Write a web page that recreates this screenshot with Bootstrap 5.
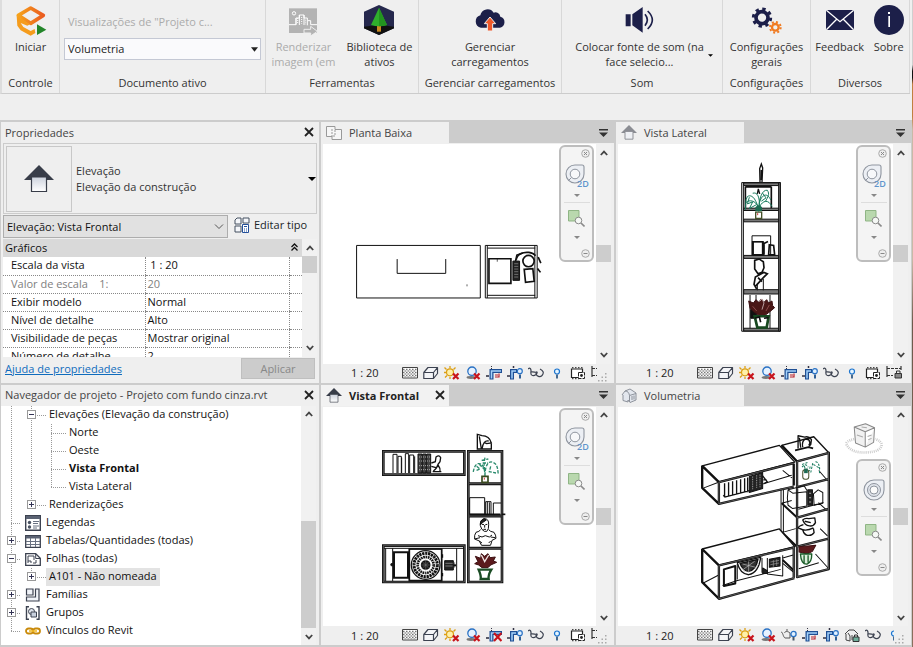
<!DOCTYPE html>
<html lang="pt-BR">
<head>
<meta charset="utf-8">
<meta name="viewport" content="width=device-width, initial-scale=1">
<title>Projeto com fundo cinza.rvt</title>
<link href="https://cdn.jsdelivr.net/npm/bootstrap@5.3.0/dist/css/bootstrap.min.css" rel="stylesheet">
<style>
:root{--chrome:#efefef;--gutter:#cccccc;--ink:#333}
body{font-family:"Open Sans","Noto Sans",sans-serif;font-size:11px;line-height:15px;color:var(--ink);background:var(--chrome);overflow:hidden}
button{font:inherit;color:inherit;background:none;border:0;padding:0}
svg{display:block;flex:none}
.app-shell{min-width:0}
.app-edge{width:1px;background:linear-gradient(#cfcfcf 0 10%,#111 11% 12%,#c08040 13% 18%,#c9b9a6 20% 40%,#6d5a4c 50%,#8a6f5c)}
.ribbon{height:94px;display:grid;grid-template-columns:58fr 206fr 153fr 143fr 161fr 88fr 99fr;border-bottom:1px solid var(--gutter);border-left:2px solid #ddd;margin-right:2px}
.r-group{border-right:1px solid #d8d8d8;min-width:0}
.r-title{padding-bottom:2px;line-height:16px}
.r-btn{padding-top:4px;line-height:15px}
.r-btn svg{margin:0 auto 3px}
.r-off{color:#ababab}
.doc-label{padding-top:14px}
.under-ribbon{height:26px}
.view-select{--bs-form-select-bg-img:url("data:image/svg+xml,%3Csvg xmlns='http://www.w3.org/2000/svg' viewBox='0 0 8 5'%3E%3Cpath fill='%23222' d='M0 0h8L4 5z'/%3E%3C/svg%3E");font-size:11px;line-height:15px;height:22px;margin-top:9px;padding:0 16px 2px 3px;border:1px solid #c4c8d4;border-radius:0;background-color:#fafafc;background-size:7px 5px;background-position:right 2px center;color:#222}
.type-select{--bs-form-select-bg-img:url("data:image/svg+xml,%3Csvg xmlns='http://www.w3.org/2000/svg' viewBox='0 0 10 6'%3E%3Cpath fill='none' stroke='%23555' d='M1 .5l4 4 4-4'/%3E%3C/svg%3E");font-size:11px;line-height:15px;height:23px;width:225px;padding:0 16px 0 3px;border:1px solid #adadad;border-radius:0;background-color:#e1e1e1;background-size:10px 6px;background-position:right 3px center;color:#111}
.type-row{margin:1px 2px 0;gap:6px}
.workspace{display:grid;grid-template-columns:318px minmax(0,293fr) minmax(0,295fr);grid-template-rows:minmax(0,1fr) minmax(0,1fr);gap:2px;padding:2px 1px;background:var(--gutter);min-height:0}
.pane{background:var(--chrome);min-height:0;min-width:0}
.pane-title{height:21px;padding:0 5px 1px 4px;color:#444}
.type-box{height:71px;margin:0 2px;border:1px solid var(--gutter)}
.type-thumb{width:66px;height:66px;margin:2px;border:1px solid #c8c8c8}
.type-name{line-height:16px;margin-left:2px}
.grid-wrap{margin:1px 2px 0;background:#fff;min-height:0;flex:1 1 0}
.props{width:100%;border-collapse:collapse;table-layout:fixed;color:#111}
.props th,.props td{height:18px;padding:0 0 2px 2px;font-weight:400;border-bottom:1px dotted #888;line-height:15px;white-space:nowrap}
.props td{border-left:1px dotted #888}
.props tbody th{padding-left:8px}
.props thead th{background:#d9d9d9;border:0}
.props .dim>*{color:#808080}
.c-name{width:142px}.c-btn{width:13px}
.foot{padding:1px 4px 4px}
.apply{width:74px;height:21px;background:#ccc;border:1px solid #bfbfbf;color:#888}
.help{color:#0f6cbd;font-size:11px}
.sbar{width:15px;background:#f1f1f1;display:flex;flex-direction:column;flex:none}
.sbar button{height:17px;display:flex;align-items:center;justify-content:center}
.sbar .track{flex:1;display:flex;flex-direction:column}
.sbar .thumb{height:17px;background:#cdcdcd}
.sbar.mid .track{justify-content:center}
.sbar.end .track{justify-content:flex-end}
.sbar.end .thumb{height:52%}
.tree-wrap{min-height:0;padding-right:3px}
.tree{list-style:none;margin:0;padding:0;background:#fff;color:#111;flex:1 1 0;min-width:0;overflow:hidden}
.tree li{display:flex;align-items:center;height:18px;white-space:nowrap}
.g{width:20px;height:18px;flex:none;display:flex;align-items:center;justify-content:center;background-repeat:no-repeat;--v:repeating-linear-gradient(#999 0 1px,transparent 1px 2px);--h:repeating-linear-gradient(90deg,#999 0 1px,transparent 1px 2px)}
.g-v{background-image:var(--v);background-position:10px 0;background-size:1px 100%}
.g-t{background-image:var(--v),var(--h);background-position:10px 0,10px 9px;background-size:1px 100%,10px 1px}
.g-l{background-image:var(--v),var(--h);background-position:10px 0,10px 9px;background-size:1px 10px,10px 1px}
.g-x{width:5px;background-image:var(--h);background-position:0 9px;background-size:5px 1px}
.exp{width:9px;height:9px;background:#fff;border:1px solid #999;position:relative}
.exp::before,.exp.more::after{content:"";position:absolute;left:1px;top:3px;width:5px;height:1px;background:#335}
.exp.more::after{left:3px;top:1px;width:1px;height:5px}
.lbl{padding:0 3px 2px;line-height:16px}
.lbl.sel{background:#e3e3e3}
.ico-lbl{padding-left:5px}
.tabstrip{height:21px;background:var(--gutter);padding-right:6px}
.v-tab{width:128px;height:21px;padding:0 4px 0 5px;background:var(--chrome);font-size:11px;color:#444;display:flex;align-items:center;gap:7px}
.v-tab.on{background:#f2f2f2;color:#222;font-weight:700}
.canvas{background:#fff;min-width:0;flex:1 1 0;display:flex;position:relative;overflow:hidden}
.canvas>svg{flex:1 1 0;min-width:0;height:100%}
.view-body{flex:1 1 0;min-height:0;margin:1px 3px 0 2px;display:flex}
.navbar2{position:absolute;right:2px;top:1px;width:35px;padding:2px;border:2px solid #bdbdbd;border-radius:6px;background:#f4f4f4;display:flex;flex-direction:column;align-items:center}
.navbar2.low{top:52px}
.navbar2 hr{width:26px;margin:0;border-color:#999}
.n-end{align-self:flex-end}
.n-wheel{margin-top:6px}
.n-drop{padding:6px 10px 5px}
.n-zoom{margin:7px 0 3px}
.n-less{margin-top:5px}
.statusbar{height:19px;padding:0 0 1px 30px;overflow:hidden}
.scale-btn{width:48px;text-align:left;color:#222;flex:none}
.s-icons{flex:1 1 0;min-width:0;overflow:hidden;display:flex}
.s-icons button{width:21px;flex:none;display:flex;justify-content:center}
.grip{width:17px}
</style>
<script src="https://cdn.jsdelivr.net/npm/bootstrap@5.3.0/dist/js/bootstrap.bundle.min.js"></script>
</head>
<body class="vh-100 d-flex">
<svg width="0" height="0" class="position-absolute" aria-hidden="true">
 <defs>
  <linearGradient id="hg" x2="0" y2="1"><stop stop-color="#ccd2dd"/><stop offset="1" stop-color="#fff"/></linearGradient>
  <symbol id="x" viewBox="0 0 10 10"><path d="M1 1l8 8M9 1L1 9" stroke="#222" stroke-width="1.8"/></symbol>
  <symbol id="up" viewBox="0 0 8 6"><path d="M.8 5L4 1.6 7.200 5" fill="none" stroke="#444" stroke-width="1.8"/></symbol>
  <symbol id="down" viewBox="0 0 8 6"><path d="M.8 1L4 4.400 7.200 1" fill="none" stroke="#444" stroke-width="1.8"/></symbol>
  <symbol id="tri" viewBox="0 0 8 4"><path d="M0 0h8L4 4z"/></symbol>
  <symbol id="tabmenu" viewBox="0 0 9 8"><path d="M0 0h9v1.500H0zM0 3.500h9L4.500 8z" fill="#333"/></symbol>
  <symbol id="house" viewBox="0 0 30 28"><path d="M15 0L30 15H0z" fill="#383d49"/><path d="M7.500 12h15v14.500h-15z" fill="url(#hg)" stroke="#383d49" stroke-width="1.200"/></symbol>
  <symbol id="house-dim" viewBox="0 0 30 28"><path d="M15 0L30 15H0z" fill="#8b8d93"/><path d="M7.500 12h15v14.500h-15z" fill="#eef0f4" stroke="#8b8d93" stroke-width="1.800"/></symbol>
  <symbol id="plan" viewBox="0 0 16 14"><path d="M.5.5H9v3h6.500v10H6v-3H.5z" fill="#f6f6f6" stroke="#999"/><path d="M6 3v8M9 4v6H6" fill="none" stroke="#999" stroke-dasharray="2 1"/></symbol>
  <symbol id="house3d" viewBox="0 0 16 15"><path d="M1 7L4 3l5-2 6 4v7l-6 2.500L7 12v2l-5-1.500V7" fill="#e3e7ee" stroke="#8d929b"/><path d="M4 3c3 0 4 2 4.500 4.500L15 5.500M8.500 7.500V14M11 8v4M13 7.500v4" stroke="#8d929b" fill="none"/></symbol>
  <symbol id="s-grid" viewBox="0 0 16 14"><path d="M.5 1.500h15v10.500H.5z" fill="#fff" stroke="#444"/><path d="M1 3.500h14M1 6.500h14M1 9.500h14" stroke="#777" stroke-width="1.500" stroke-dasharray="1.500 1.500"/><path d="M2.500 5h12M2.500 8h12M2.500 11h12" stroke="#999" stroke-width="1.500" stroke-dasharray="1.500 1.500"/></symbol>
  <symbol id="s-box" viewBox="0 0 16 14"><path d="M.8 6.500L5 1.500h9.500v6L10.500 12.500H.8zM.8 6.500h9.700v6M10.500 6.500l4-5" fill="#f4f5f8" stroke="#3c4250" stroke-width="1.200" stroke-linejoin="round"/></symbol>
  <symbol id="redx" viewBox="0 0 16 14"><path d="M9 7.500l5.500 5.500M14.500 7.500L9 13" stroke="#c8141c" stroke-width="2.200"/></symbol>
  <symbol id="s-sun" viewBox="0 0 16 14"><path d="M6 0v2.500M.5 1.500l2 2M0 6.500h2M1 11.500l2-2M11.500 1.500l-2 2M6 13v-2" stroke="#dca016" stroke-width="1.300"/><circle cx="6" cy="6.300" r="3.500" fill="#fff0a8" stroke="#dca016" stroke-width="1.200"/><use href="#redx"/></symbol>
  <symbol id="s-shadow" viewBox="0 0 16 14"><ellipse cx="6" cy="11.500" rx="4.500" ry="1.400" fill="#777"/><circle cx="7" cy="5.200" r="4.200" fill="#e6f2ff" stroke="#2a72c4" stroke-width="1.300"/><use href="#redx"/></symbol>
  <symbol id="frame" viewBox="0 0 16 14"><path d="M0 10h3" stroke="#334" stroke-width="1.600"/><path d="M5.500 13.500V5H16" fill="none" stroke="#1f4f94" stroke-width="4"/><path d="M5.500 12.500V5H15" fill="none" stroke="#a5d2fa" stroke-width="1.500"/><path d="M5.500 0v3" stroke="#334" stroke-dasharray="1 1"/></symbol>
  <symbol id="s-crop" viewBox="0 0 16 14"><use href="#frame"/><path d="M9 11h4V7.500M9 9h3" fill="none" stroke="#b8202a" stroke-width="1.200"/></symbol>
  <symbol id="s-crop-x" viewBox="0 0 16 14"><use href="#frame"/><path d="M8 5l7.500 8M15.500 5L8 13" stroke="#c8141c" stroke-width="2.200"/></symbol>
  <symbol id="s-region" viewBox="0 0 16 14"><path d="M0 10h3M6.500 0v2" stroke="#334" stroke-width="1.500"/><path d="M5 13.500V5h5" fill="none" stroke="#1f4f94" stroke-width="4"/><path d="M5 12.500V5h4" fill="none" stroke="#a5d2fa" stroke-width="1.500"/><circle cx="12.800" cy="5.200" r="2.500" fill="#dff0ff" stroke="#2a72c4" stroke-width="1.200"/><path d="M12 8.500h2v4h-2z" fill="#2f5f95"/></symbol>
  <symbol id="s-glasses" viewBox="0 0 16 14"><path d="M0 3c2-2 3 0 3 1.500C3 7 2 9 4.500 9.500S9 8 9.200 6.500c0-1-1.500-.5-1.200 1 .5 3 4 4 6 2 2.500-3 1-5-2-6.500M3 6c2-.5 4 0 6 .5" fill="none" stroke="#3c4250" stroke-width="1.200"/></symbol>
  <symbol id="s-bulb" viewBox="0 0 16 14"><circle cx="8" cy="5.500" r="2.500" fill="#e6f5ff" stroke="#1b74cf" stroke-width="1.200"/><path d="M7 8.500h2v4H7z" fill="#456a90"/></symbol>
  <symbol id="s-chip" viewBox="0 0 16 14"><path d="M1.500 3h11v8.500h-11z" fill="#fff" stroke="#222" stroke-width="1.200"/><path d="M2 1.700h11M2 12.700h7" stroke="#222" stroke-dasharray="1.500 1.500"/><path d="M8.500 6.500h6v6h-6z" fill="#fff" stroke="#222" stroke-dasharray="4 1"/><circle cx="11.500" cy="9.500" r="1.400" fill="#222"/></symbol>
  <symbol id="s-dim" viewBox="0 0 16 14"><path d="M1 0v11M15 0v4" stroke="#333" stroke-width="1.200"/><path d="M1 2.500h14M1 9.500h6" fill="none" stroke="#333" stroke-dasharray="3 1"/><path d="M9 7.500h6.500V12H9z" fill="#888" stroke="#333"/><path d="M10.500 7V5h3.500v2" fill="none" stroke="#333"/></symbol>
  <symbol id="s-tea" viewBox="0 0 16 14"><path d="M0 4c2 0 2 5 4 6h5V5C7 3 4 3 3.500 5M6 3V1" fill="#eee" stroke="#555"/><circle cx="12.500" cy="6" r="2.600" fill="#dff0ff" stroke="#2a72c4" stroke-width="1.300"/><path d="M11.500 9h2v3.500h-2z" fill="#456"/></symbol>
  <symbol id="s-lock" viewBox="0 0 16 14"><path d="M1 6l4-4h5l4 4M2 6v6l4 1V8L4 5M8 12V7" fill="#eee" stroke="#444"/><path d="M9 9h6v4.500H9z" fill="#6fae9a" stroke="#333"/><path d="M10.500 9V7h3v2" fill="none" stroke="#333"/></symbol>
  <symbol id="gripdots" viewBox="0 0 10 10"><path d="M8 1h1.500v1.500H8zM8 4.500h1.500V6H8zM4.500 4.500H6V6H4.500zM8 8h1.500v1.500H8zM4.500 8H6v1.500H4.500zM1 8h1.500v1.500H1z" fill="#aaa"/></symbol>
  <symbol id="n-x" viewBox="0 0 9 9"><circle cx="4.500" cy="4.500" r="3.800" fill="#eee" stroke="#aaa"/><path d="M3 3l3 3M6 3L3 6" stroke="#888"/></symbol>
  <symbol id="n-minus" viewBox="0 0 9 9"><circle cx="4.500" cy="4.500" r="3.800" fill="#eee" stroke="#aaa"/><path d="M2.500 4.500h4" stroke="#888"/></symbol>
  <symbol id="n-wheel2d" viewBox="0 0 24 24"><path d="M10 1h7q2 0 2 2v7a9 9 0 1 1-9-9z" fill="#eceff4" stroke="#8f959f" stroke-width="1.100"/><circle cx="10" cy="10" r="4.800" fill="#f7f8fa" stroke="#8f959f"/><path d="M6.500 13.500l-3 3" stroke="#8f959f"/><text x="12" y="23" font-size="9" font-weight="600" fill="#5f95cc">2D</text></symbol>
  <symbol id="n-wheel3d" viewBox="0 0 24 24"><path d="M12 2h8q2 0 2 2v8a10 10 0 1 1-10-10z" fill="#eceff4" stroke="#8f959f" stroke-width="1.100"/><circle cx="12" cy="12" r="6.500" fill="#dfe3ea" stroke="#8f959f"/><circle cx="12" cy="12" r="4" fill="#fafafa" stroke="#8f959f"/></symbol>
  <symbol id="n-zoomr" viewBox="0 0 17 17"><path d="M.5.5h10.500V11H.5z" fill="#b9d8ae" stroke="#8fb585"/><circle cx="10.500" cy="10.500" r="3.300" fill="#f5f8f5" stroke="#8a8a8a"/><path d="M13 13l3.500 3.500" stroke="#8a8a8a" stroke-width="1.600"/></symbol>
 </defs>
</svg>

<template id="tpl-scroll"><button aria-label="Subir"><svg width="8" height="6"><use href="#up"/></svg></button><div class="track"><div class="thumb"></div></div><button aria-label="Descer"><svg width="8" height="6"><use href="#down"/></svg></button></template>
<template id="tpl-nav"><button class="n-end" aria-label="Fechar"><svg width="9" height="9"><use href="#n-x"/></svg></button><button class="n-wheel" aria-label="Roda de navegação"><svg width="24" height="24"><use class="wheel" href="#n-wheel2d"/></svg></button><button class="n-drop" aria-label="Opções da roda"><svg width="6" height="3" fill="#888"><use href="#tri"/></svg></button><hr><button class="n-zoom" aria-label="Zoom"><svg width="17" height="17"><use href="#n-zoomr"/></svg></button><button class="n-drop" aria-label="Opções de zoom"><svg width="6" height="3" fill="#888"><use href="#tri"/></svg></button><button class="n-end n-less" aria-label="Recolher"><svg width="9" height="9"><use href="#n-minus"/></svg></button></template>

<div class="app-shell d-flex flex-column flex-grow-1">
 <header>
  <div class="ribbon text-center">
   <section class="r-group d-flex flex-column">
    <button class="r-btn"><svg width="32" height="32" viewBox="45 9 96 96"><defs><linearGradient id="og"><stop stop-color="#f6a31a"/><stop offset="1" stop-color="#ea5b20"/></linearGradient></defs><path d="M55 43L92 21l38 22-38 24z" fill="none" stroke="url(#og)" stroke-width="11" stroke-linejoin="round"/><path d="M50 44l2 30 10 14 30 16 14-8-2-12-12 6-22-12-8-12 20 8 8-4-28-18z" fill="#f59c1c"/><path d="M111 70l28 16-28 16z" fill="#23862a"/></svg>Iniciar</button>
    <div class="r-title mt-auto">Controle</div>
   </section>
   <section class="r-group d-flex flex-column px-1">
    <label for="vsel" class="r-off doc-label text-start ps-1">Visualizações de "Projeto c...</label>
    <select id="vsel" class="form-select view-select"><option>Volumetria</option></select>
    <div class="r-title mt-auto">Documento ativo</div>
   </section>
   <section class="r-group d-flex flex-column">
    <div class="d-flex justify-content-around">
     <button class="r-btn r-off text-nowrap" disabled><svg width="32" height="32" viewBox="867 8 96 96"><path d="M873 21h84v74h-84z" fill="#b3b3b3"/><path d="M873 70h21V50h10v-9h14v9h10v8h10v12h19M894 50v20M904 41v30M918 41v30M928 58v14" fill="none" stroke="#fff" stroke-width="3"/><circle cx="888" cy="36" r="5" fill="none" stroke="#fff" stroke-width="3"/><path d="M899 50v18M911 47v20M923 55v14" stroke="#fff" stroke-width="3" stroke-dasharray="3 3"/><path d="M918 84h20v-9l20 15-20 14v-9h-20z" fill="#b3b3b3" stroke="#efefef" stroke-width="3"/></svg>Renderizar<br>imagem (em</button>
     <button class="r-btn text-nowrap"><svg width="32" height="32" viewBox="1089 12 96 96"><path d="M1137 15l45 20v50l-45 20-45-20V35z" fill="#25284d"/><path d="M1092 80l45-6 45 6v5l-45 20-45-20z" fill="#111"/><path d="M1131 76h12v19h-12z" fill="#c98a22"/><path d="M1137 23l24 52q-24 8-48 0z" fill="#2fae2c"/><path d="M1137 23l24 52q-12 4-24 4z" fill="#23941f"/></svg>Biblioteca de<br>ativos</button>
    </div>
    <div class="r-title mt-auto">Ferramentas</div>
   </section>
   <section class="r-group d-flex flex-column">
    <button class="r-btn"><svg width="32" height="32" viewBox="72 12 96 96"><path d="M93 83a19 19 0 0 1-2-37 22 22 0 0 1 40-8 15 15 0 0 1 20 12 17 17 0 0 1-1 33z" fill="#1c1f49"/><path d="M120 51l17 20h-9v22h-16V71h-9z" fill="#f0592a" stroke="#efefef" stroke-width="3"/></svg>Gerenciar<br>carregamentos</button>
    <div class="r-title mt-auto text-nowrap">Gerenciar carregamentos</div>
   </section>
   <section class="r-group d-flex flex-column">
    <div class="d-flex align-items-center justify-content-center gap-1 ps-1">
     <button class="r-btn text-nowrap"><svg width="32" height="32" viewBox="529 12 96 96"><path d="M534 43h15v36h-15zM554 43l31-22v77l-31-22z" fill="#1c1f49"/><path d="M592 43q14 17 0 34M600 33q28 27 0 54" fill="none" stroke="#1c1f49" stroke-width="5"/></svg>Colocar fonte de som (na<br>face selecio...</button>
     <button class="align-self-end pb-2" aria-label="Opções de som"><svg width="5" height="3" class="mb-1"><use href="#tri"/></svg></button>
    </div>
    <div class="r-title mt-auto">Som</div>
   </section>
   <section class="r-group d-flex flex-column">
    <button class="r-btn"><svg width="32" height="32" viewBox="900 12 96 96"><circle cx="933" cy="53" r="18" fill="none" stroke="#1c1f49" stroke-width="11"/><circle cx="933" cy="53" r="26" fill="none" stroke="#1c1f49" stroke-width="9" stroke-dasharray="10 10.420"/><circle cx="973" cy="82" r="10" fill="none" stroke="#f07b22" stroke-width="7"/><circle cx="973" cy="82" r="16" fill="none" stroke="#f07b22" stroke-width="6" stroke-dasharray="6 6.566"/></svg>Configurações<br>gerais</button>
    <div class="r-title mt-auto">Configurações</div>
   </section>
   <section class="r-group d-flex flex-column">
    <div class="d-flex justify-content-around">
     <button class="r-btn"><svg width="32" height="32" viewBox="1125 12 96 96"><path d="M1131 30h84v60h-84z" fill="#1c1f49"/><path d="M1132 31l41 34 41-34M1132 89l31-31M1214 89l-31-31" fill="none" stroke="#fff" stroke-width="4"/></svg>Feedback</button>
     <button class="r-btn"><svg width="32" height="32" viewBox="1266 12 96 96"><circle cx="1314" cy="60" r="45" fill="#1c1f49"/><path d="M1312 48h5v33h-5zM1311 36h6v6h-6z" fill="#fff"/></svg>Sobre</button>
    </div>
    <div class="r-title mt-auto">Diversos</div>
   </section>
  </div>
  <div class="under-ribbon"></div>
 </header>

 <main class="workspace flex-grow-1">
  <section class="pane d-flex flex-column">
   <div class="pane-title d-flex justify-content-between align-items-center"><span>Propriedades</span><button aria-label="Fechar propriedades"><svg width="10" height="10"><use href="#x"/></svg></button></div>
   <div class="type-box d-flex align-items-center flex-shrink-0">
    <div class="type-thumb d-flex align-items-center justify-content-center"><svg width="30" height="28"><use href="#house"/></svg></div>
    <div class="type-name flex-grow-1">Elevação<br>Elevação da construção</div>
    <button aria-label="Tipos"><svg width="8" height="4"><use href="#tri"/></svg></button>
   </div>
   <div class="type-row d-flex align-items-center">
    <select class="form-select type-select flex-shrink-0" aria-label="Instância"><option>Elevação: Vista Frontal</option></select>
    <button class="d-flex align-items-center gap-1 text-dark text-nowrap pb-1"><svg width="16" height="16" viewBox="0 0 16 16"><path d="M1 3l2-2h4v6H1zM9 1h6v5H9zM1 9h6v6H1z" fill="#f4f6fa" stroke="#455060"/><path d="M8.500 7.500h6v8h-6z" fill="#fff" stroke="#24509a"/><path d="M10 9.500h3M10 12h1M12 12h1M10 14h1M12 14h1" stroke="#24509a"/></svg>Editar tipo</button>
   </div>
   <div class="grid-wrap d-flex">
    <div class="flex-grow-1 overflow-hidden">
     <table class="props">
      <colgroup><col class="c-name"><col><col class="c-btn"></colgroup>
      <thead><tr><th colspan="2">Gráficos</th><th><svg width="7" height="8" viewBox="0 0 7 8"><path d="M.5 4l3-3 3 3M.5 7.500l3-3 3 3" fill="none" stroke="#111" stroke-width="1.300"/></svg></th></tr></thead>
      <tbody>
       <tr><th>Escala da vista</th><td>&nbsp;1 : 20</td><td></td></tr>
       <tr class="dim"><th>Valor de escala &nbsp;&nbsp; 1:</th><td>20</td><td></td></tr>
       <tr><th>Exibir modelo</th><td>Normal</td><td></td></tr>
       <tr><th>Nível de detalhe</th><td>Alto</td><td></td></tr>
       <tr><th>Visibilidade de peças</th><td>Mostrar original</td><td></td></tr>
       <tr><th>Número de detalhe</th><td>2</td><td></td></tr>
      </tbody>
     </table>
    </div>
    <div class="sbar"></div>
   </div>
   <div class="foot d-flex justify-content-between align-items-center"><a class="help" href="#">Ajuda de propriedades</a><button class="apply" disabled>Aplicar</button></div>
  </section>

  <section class="pane d-flex flex-column">
   <div class="tabstrip d-flex align-items-center justify-content-between"><button class="v-tab"><svg width="16" height="14"><use href="#plan"/></svg>Planta Baixa</button><button aria-label="Lista de vistas"><svg width="9" height="8"><use href="#tabmenu"/></svg></button></div>
   <div class="view-body">
    <div class="canvas">
     <svg viewBox="9 72 819 660" preserveAspectRatio="xMinYMin meet" fill="none" stroke="#111" stroke-width="3"><path d="M110 377h372v158H110zM232 418v43h146v-43M497 377h156v158H497zM503 377v158M646 377v158M503 385h144M503 527h144"/><path d="M442 494v6M533 417v9" stroke-width="2"/><path d="M508 417h66v74h-66zM614 449l26-2 4 38-26 3zM590 420c2-16 20-24 38-22q14 2 20 10" stroke-width="5"/><circle cx="627" cy="424" r="17" stroke-width="5"/><path d="M580 424h20v58h-20z" fill="#222"/><path d="M584 432h12M584 440h12M584 448h12M584 456h12M584 464h12M584 472h12" stroke="#999" stroke-width="2"/><path d="M588 424l4-18 18-6M656 412l8 18M654 446l9 12" stroke-width="5"/></svg>
     <div class="navbar2"></div>
    </div>
    <div class="sbar mid"></div>
   </div>
   <div class="statusbar d-flex align-items-center"><button class="scale-btn">1 : 20</button>
    <div class="s-icons" data-icons="grid box sun shadow crop region glasses bulb chip dim"></div>
    <div class="grip align-self-end"><svg width="10" height="10"><use href="#gripdots"/></svg></div></div>
  </section>

  <section class="pane d-flex flex-column">
   <div class="tabstrip d-flex align-items-center justify-content-between"><button class="v-tab"><svg width="16" height="15"><use href="#house-dim"/></svg>Vista Lateral</button><button aria-label="Lista de vistas"><svg width="9" height="8"><use href="#tabmenu"/></svg></button></div>
   <div class="view-body">
    <div class="canvas">
     <svg viewBox="15 72 822 660" preserveAspectRatio="xMinYMin meet" fill="none" stroke="#111" stroke-width="3"><path d="M387 188h116v447H387zM392 188v447"/><path d="M498 188h5v447h-5z" fill="#777"/><path d="M393 189h105v8H393zM393 265h105v7H393zM393 298h105v8H393zM393 407h105v9H393zM393 510h105v13H393zM393 626h105v8H393z" fill="#777"/><path d="M398 200v65M476 200v65M398 201h78" stroke-width="5"/><path d="M442 186l-1-40 5-14 4 12-2 42M446 150v30M434 222l3-15 4 15" stroke-width="4"/>
     <path d="M438 275c-4-30-18-55-34-45-8 12-4 30-6 40M438 262c-10-20-28-24-38-14M438 265c2-30 10-56 26-54 8 12 2 20-6 34M440 262c10-22 28-24 38-2M440 250c6-26 24-34 34-10M410 232l-6 20 16-6-10 20 22-12M420 220c14-4 22 10 20 44M450 220l10 14-14 10" stroke="#177a5c" stroke-width="3"/><path d="M428 262q10-12 20 0v12h-20z" fill="#1d6b52" stroke="none"/><path d="M429 277h18v19h-18z" stroke="#45502a" stroke-width="4"/><path d="M435 280v6" stroke="#c33"/>
     <path d="M418 406v-58h56v58M422 366h31v40h-31z"/><path d="M420 366h30v39h-30zM454 405v-34l12-6M470 375l13 2 3 28h-18z" stroke-width="5"/>
     <path d="M426 422l14-4 12 8 2 18-6 14-12 4-10-14zM428 500l24-26 12-12-10-4-26 14-4 22 8 14M436 474l12 12" stroke-width="5"/><path d="M434 512v-20M452 512v-34" stroke-width="3"/>
     <path d="M412 526v100M472 526v100M430 526v20"/><path d="M414 570h18v26h-18z" fill="#111"/><path d="M412 566l-4-22 14 6 8-10 8 8 8-10 8 10 8-8 6 10 10-6 2 14 6 6-14 12-16 12h-16l-18-12z" fill="#4a1716" stroke="#3a1012"/><path d="M440 546l8-8 6 12-6 20" stroke="#b9a0a0"/><path d="M420 560l12 14M470 556l-10 18" stroke="#8b4a48"/><path d="M426 590h42l-6 34h-28z" fill="#fff" stroke="#17471f" stroke-width="8"/><path d="M426 596l14-4 4 16M468 594l-14 2" stroke="#111" stroke-width="5"/></svg>
     <div class="navbar2"></div>
    </div>
    <div class="sbar mid"></div>
   </div>
   <div class="statusbar d-flex align-items-center"><button class="scale-btn">1 : 20</button>
    <div class="s-icons" data-icons="grid box sun shadow crop region glasses bulb chip dim"></div></div>
  </section>

  <section class="pane d-flex flex-column">
   <div class="pane-title d-flex justify-content-between align-items-center text-nowrap"><span>Navegador de projeto - Projeto com fundo cinza.rvt</span><button aria-label="Fechar navegador"><svg width="10" height="10"><use href="#x"/></svg></button></div>
   <div class="tree-wrap d-flex flex-grow-1">
    <ul class="tree">
     <li><span class="g g-v"></span><span class="g g-t"><button class="exp" aria-label="Recolher"></button></span><span class="g g-x"></span><span class="lbl">Elevações (Elevação da construção)</span></li>
     <li><span class="g g-v"></span><span class="g g-v"></span><span class="g g-t"></span><span class="g g-x"></span><span class="lbl">Norte</span></li>
     <li><span class="g g-v"></span><span class="g g-v"></span><span class="g g-t"></span><span class="g g-x"></span><span class="lbl">Oeste</span></li>
     <li><span class="g g-v"></span><span class="g g-v"></span><span class="g g-t"></span><span class="g g-x"></span><span class="lbl fw-bold">Vista Frontal</span></li>
     <li><span class="g g-v"></span><span class="g g-v"></span><span class="g g-l"></span><span class="g g-x"></span><span class="lbl">Vista Lateral</span></li>
     <li><span class="g g-v"></span><span class="g g-l"><button class="exp more" aria-label="Expandir"></button></span><span class="g g-x"></span><span class="lbl">Renderizações</span></li>
     <li><span class="g g-t"></span><svg class="ms-1" width="16" height="16" viewBox="0 0 16 16"><path d="M.7.700h14.600v14.600H.7z" fill="#fff" stroke="#3c4250" stroke-width="1.400"/><path d="M1 1h14v3H1z" fill="#5a6273"/><circle cx="4.500" cy="7.500" r="1.700" fill="#4a5262"/><circle cx="4.500" cy="12" r="1.700" fill="#4a5262"/><path d="M8 6.500h6M8 8.500h5M8 11h6M8 13h4" stroke="#6a7282"/></svg><span class="lbl ico-lbl">Legendas</span></li>
     <li><span class="g g-t"><button class="exp more" aria-label="Expandir"></button></span><svg class="ms-1" width="16" height="14" viewBox="0 0 16 14"><path d="M.7 1.700h14.600v11.600H.7z" fill="#fff" stroke="#3c4250" stroke-width="1.300"/><path d="M1 2h14v2.500H1z" fill="#5a6273"/><path d="M1 7.500h14M1 10.500h14M5.500 4v9M10.500 4v9" stroke="#6a7282"/></svg><span class="lbl ico-lbl">Tabelas/Quantidades (todas)</span></li>
     <li><span class="g g-t"><button class="exp" aria-label="Recolher"></button></span><svg class="ms-1" width="16" height="14" viewBox="0 0 16 14"><path d="M.7 1.700h10l4.600 4.500v7.100H.7z" fill="#fff" stroke="#3c4250" stroke-width="1.300"/><path d="M3 11V4h6v4M3 9h3v2M8 11h3V8M10.700 2v4.500h4.500" fill="none" stroke="#3c4250"/></svg><span class="lbl ico-lbl">Folhas (todas)</span></li>
     <li><span class="g g-v"></span><span class="g g-l"><button class="exp more" aria-label="Expandir"></button></span><span class="g g-x"></span><span class="lbl sel">A101 - Não nomeada</span></li>
     <li><span class="g g-t"><button class="exp more" aria-label="Expandir"></button></span><svg class="ms-1" width="16" height="14" viewBox="0 0 16 14"><path d="M1.500 1h6.500v6H1.500zM10.500 1H14v12H1.500v-4h9z" fill="#f0f3f8" stroke="#3c4250" stroke-width="1.200"/></svg><span class="lbl ico-lbl">Famílias</span></li>
     <li><span class="g g-t"><button class="exp more" aria-label="Expandir"></button></span><svg class="ms-1" width="16" height="14" viewBox="0 0 16 14"><path d="M4 .7H1.500v12.600H4M11.500.700H14v12.600h-2.500" fill="none" stroke="#3c4250" stroke-width="1.400"/><circle cx="6.500" cy="5.500" r="3" fill="#dfe4ec" stroke="#3c4250"/><path d="M6 6h5.500v5H6z" fill="#c8d0dd" stroke="#3c4250"/></svg><span class="lbl ico-lbl">Grupos</span></li>
     <li><span class="g g-l"></span><svg class="ms-1" width="16" height="8" viewBox="0 0 16 8"><rect x="1" y="1.500" width="7" height="5" rx="2.500" fill="none" stroke="#c98a0a" stroke-width="1.800"/><rect x="8" y="1.500" width="7" height="5" rx="2.500" fill="none" stroke="#c98a0a" stroke-width="1.800"/><path d="M4 4h8" stroke="#f2bb2a" stroke-width="1.600"/></svg><span class="lbl ico-lbl">Vínculos do Revit</span></li>
    </ul>
    <div class="sbar end"></div>
   </div>
  </section>

  <section class="pane d-flex flex-column">
   <div class="tabstrip d-flex align-items-center justify-content-between"><div class="v-tab on"><svg width="16" height="15"><use href="#house"/></svg><span class="flex-grow-1">Vista Frontal</span><button aria-label="Fechar vista"><svg width="10" height="10"><use href="#x"/></svg></button></div><button aria-label="Lista de vistas"><svg width="9" height="8"><use href="#tabmenu"/></svg></button></div>
   <div class="view-body">
    <div class="canvas">
     <svg viewBox="9 72 819 657" preserveAspectRatio="xMinYMin meet" fill="none" stroke="#111" stroke-width="3"><path d="M190 205h243v70H190zM190 488h243v109H190zM445 205h101v392H445z" stroke-width="8"/><path d="M190 205h243v70H190zM190 488h243v109H190zM445 205h101v392H445z" stroke="#777" stroke-width="2"/><path d="M447 302h97M447 399h97M447 496h97" stroke-width="9"/><path d="M447 302h97M447 399h97M447 496h97" stroke="#777" stroke-width="2"/><path d="M546 394h10" stroke-width="5"/>
     <path d="M219 270v-56h12v56M234 270v-50h10v50M245 270v-46M256 270v-58h10v58M269 270v-54h12v54M284 270v-50"/><path d="M294 213h12v57h-12zM308 213h10v57h-10zM320 213h12v57h-12z" fill="#444"/><path d="M297 222h34M297 234h34M297 248h34M297 260h34" stroke="#aaa" stroke-dasharray="3 3"/><path d="M334 240l12-4 2-14q10-8 14 2l-2 12-6 8q-4 14-14 20M334 250l14 4M338 266h26M354 246q8 10 6 20" stroke-width="4"/>
     <path d="M472 200v-46l14 4q22 0 28 22l-14 2-8-4M478 160l6 38M514 180v18M474 198h42M486 198q4-28 20-24" stroke-width="4"/>
     <path d="M495 282c0-28-8-42-20-40s-14 20-16 28M495 278c0-30 10-46 24-40s14 20 16 38M495 262c-6-20 0-34 0-40M485 232l20-4M488 240h16M470 250l10 8-14 6M512 250l-4 16 20 4M478 244l16 16" stroke="#2a8a6c" stroke-width="4" stroke-dasharray="10 4"/><path d="M486 280h18v18h-18z" stroke="#3a4a20" stroke-width="5"/><path d="M493 284v6" stroke="#c33"/>
     <path d="M449 344h45v50h-45zM497 396v-40h16v40M502 356v40M508 358v38M520 396v-36h23"/><path d="M449 394h92" stroke-width="5"/>
     <path d="M481 428q-2-18 12-21 14 0 13 18l-1 12q-3 12-12 8-9-4-12-17zM482 440q-4 6-14 8-6 8-4 20l14 6 6 12M506 440q4 6 16 8 6 8 6 18l-12 6-4 14M484 487h28M474 458l12 4 10-4 12 4 8-6M464 468l16-4M526 464l-14-2M478 474l8 6M512 474l-6 6M486 424l6 1M496 425l6-1M494 426v8M490 439h8" stroke-width="3"/><path d="M481 426q0-16 12-19l6 4-12 8z" fill="#222"/>
     <path d="M466 520l16 6 2-14 10 8 10-8 6 12 16-2-6 12 10 4-18 8-8 8h-18l-10-8-12-4 10-6z" fill="#5b1a1c" stroke="#3d1012"/><path d="M484 516l10 20 12-20" stroke="#efe4e4" stroke-width="4"/><path d="M476 560q8 18 6 28h24q-2-12 8-28z" stroke="#1a4c24" stroke-width="7"/>
     <path d="M192 496h240M218 496v98M410 496v98M197 496v98M268 498h97v95h-97z"/><path d="M222 508h42v76h-42z" stroke-width="6"/><path d="M268 498v95h97v-95z" stroke-width="5"/><circle cx="317" cy="546" r="43" stroke-width="4"/><circle cx="317" cy="546" r="35" stroke-width="9" stroke-dasharray="7 2"/><circle cx="317" cy="546" r="24" stroke-width="8" stroke-dasharray="5 2"/><circle cx="317" cy="546" r="12" fill="#222" stroke-width="5"/><path d="M317 503v86M274 546h86M287 516l60 60M347 516l-60 60" stroke="#999" stroke-width="1"/><path d="M211 545h10M216 540v10M367 514v10M367 570v10M264 520v8M264 570v8" stroke-width="5"/><path d="M374 533h26v28h-26z" fill="#222"/><path d="M376 541h22M376 549h22M404 538v16" stroke="#777"/><path d="M400 547h8" stroke-width="6"/></svg>
     <div class="navbar2"></div>
    </div>
    <div class="sbar mid"></div>
   </div>
   <div class="statusbar d-flex align-items-center"><button class="scale-btn">1 : 20</button>
    <div class="s-icons" data-icons="grid box sun shadow crop-x region glasses bulb chip dim"></div>
    <div class="grip align-self-end"><svg width="10" height="10"><use href="#gripdots"/></svg></div></div>
  </section>

  <section class="pane d-flex flex-column">
   <div class="tabstrip d-flex align-items-center justify-content-between"><button class="v-tab"><svg width="16" height="15"><use href="#house3d"/></svg>Volumetria</button><button aria-label="Lista de vistas"><svg width="9" height="8"><use href="#tabmenu"/></svg></button></div>
   <div class="view-body">
    <div class="canvas">
     <svg viewBox="15 72 822 657" preserveAspectRatio="xMinYMin meet" fill="none" stroke="#111" stroke-width="3" stroke-linejoin="round">
      <path d="M272 314l42-16M272 598l46-24M328 606l42-14M370 592l132-34M503 316v132M510 316v132M505 360l30-8M505 448l42-12M555 378l75-20M615 358l26 24M620 436l22 22M606 512l38 42M556 556l60-18M616 262l26 30M508 262l28 22M455 300l80-24M508 524l34-10M508 540l34 28"/>
      <path d="M505 360l46 43M505 446l46 44M508 530l34 32" stroke-width="6"/>
      <path d="M334 300v42M346 297v42M358 294v44M370 291v44M382 288v44M394 285v44M403 283v44M334 342l84-22M330 336l6 6" stroke-width="4"/><path d="M408 280l40-12v48l-40 12z" fill="#222"/><path d="M418 280v38M430 276v38M440 274v38" stroke="#999" stroke-dasharray="4 3"/><path d="M448 278l14 18-12 6M450 290h10" stroke-width="4"/>
      <path d="M332 558l34-10v52l-34 8z" stroke-width="6"/><path d="M372 542v46M446 524v44M462 524v48l46 6v-62"/><path d="M372 538q8 34 34 36 30-6 36-52z" stroke-width="4"/><path d="M380 540q8 22 26 24 22-4 28-36z" fill="#333" stroke-width="4"/><path d="M388 542l40 10M406 534v34M390 558l34-24M384 552l10 14M426 556l10-14" stroke="#bbb" stroke-width="2"/><path d="M468 528l32-6v26l-32 4z" fill="#222"/><path d="M471 536l26-5M471 544l26-5M480 530v20M490 528v20" stroke="#999" stroke-width="2"/><path d="M448 554v16h14v-8z" fill="#222"/>
      <path d="M267 248L498 187l46 50-227 60zM267 497l231-60 46 53-227 56zM505 187l96-26 45 48-95 26z" fill="#fff" stroke-width="4"/>
      <g id="bars"><path d="M317 297l224-57M267 248v66l50 48 224-52M317 297v65M541 241v66M317 546l224-53M267 497v99l50 50 226-62M317 546v100M541 490v94M267 248l50 49M267 497l50 49M505 187l46 48 95-26v348l-95 24V235M551 312l94-24M551 403l94-26M551 490l94-24" stroke-width="7"/>
      <path d="M317 297l224-57M317 362l224-52M317 297v65M317 546l224-53M317 646l226-62M317 546v100M541 490v94M551 235v346M551 235l95-26M645 209v348M551 581l94-24M551 312l94-24M551 403l94-26M551 490l94-24" stroke="#999" stroke-width="1.500"/></g>
      <path d="M545 202l40-10 14 4" stroke-width="5"/><path d="M554 196v-38l20 4q12-4 20 8l-2 14-6 6M568 192q-4-18 8-24l10 2q6 8 0 16M558 164l4 30" stroke-width="4"/>
      <path d="M566 252q10-14 18 0M572 248l8 18M598 240l-6 28M606 236q14 0 12 34M600 244l20 12M590 250l-2 14M566 244l16-6" stroke="#177a5c" stroke-width="3" stroke-dasharray="7 4"/><rect x="568" y="260" width="18" height="28" rx="7" stroke="#45502a"/><path d="M572 256h11v14h-11z" fill="#1d6b52" stroke="none"/>
      <path d="M524 320q-4 24 0 46l14 10 42-8v-42l-42 4zM524 320l48-12 10 16M600 332l14-12 14 8v32l-26 6z"/><path d="M583 320h14v46h-14z" fill="#222"/><path d="M587 330h6M587 344h6M587 356h6" stroke="#aaa"/>
      <path d="M568 410q6-6 18-4l18-2 2 14q-6 12-18 10-14-2-20-18zM570 424q-14 4-16 10l14 6q4 14 14 16 14 2 20-8l-2-12M560 436q16 10 40-2M574 414l18 4" stroke-width="4"/>
      <path d="M557 490l50-4-10 18-16 8-24-6z" fill="#5b1a1c" stroke="#3d1012"/><path d="M561 512h34q0 26-14 30-18 2-20-30zM572 516v24M584 516v22" fill="#dff0dd" stroke="#1a5c28" stroke-width="4"/>
      <g stroke="#999" stroke-width="3"><path d="M722 168q-28 6-22 18 14 24 58 22 44-2 46-22 0-12-20-18" stroke="#ccc" stroke-width="8" stroke-dasharray="3 3"/><path d="M722 132l34-10 27 12-28 12zM722 132l4 48 29 12V146M783 134l-3 44-25 14" fill="#f1f1f1" stroke="#888"/><path d="M730 156l18 6M762 160l12-4M744 132l16 2M764 170l10-4" stroke="#aaa"/></g></svg>
     <div class="navbar2 low" data-wheel="3d"></div>
    </div>
    <div class="sbar mid"></div>
   </div>
   <div class="statusbar d-flex align-items-center"><button class="scale-btn">1 : 20</button>
    <div class="s-icons" data-icons="grid box sun shadow tea crop region lock glasses bulb"></div>
    <div class="grip align-self-end"><svg width="10" height="10"><use href="#gripdots"/></svg></div></div>
  </section>
 </main>
</div>
<div class="app-edge"></div>
<script>
const names={grid:"Nível de detalhe",box:"Estilo visual",sun:"Caminho do sol",shadow:"Sombras",crop:"Recortar vista","crop-x":"Recorte desativado",region:"Região de recorte",glasses:"Ocultar/isolar",bulb:"Revelar ocultos",chip:"Modelo analítico",dim:"Restrições",tea:"Renderização",lock:"Bloquear vista"};
document.querySelectorAll(".sbar").forEach(e=>e.append(document.getElementById("tpl-scroll").content.cloneNode(true)));
document.querySelectorAll(".navbar2").forEach(e=>{
  e.append(document.getElementById("tpl-nav").content.cloneNode(true));
  if(e.dataset.wheel) e.querySelector(".wheel").setAttribute("href","#n-wheel"+e.dataset.wheel);
});
document.querySelectorAll(".s-icons").forEach(e=>{
  e.innerHTML=e.dataset.icons.split(" ").map(n=>`<button aria-label="${names[n]}"><svg width="16" height="14"><use href="#s-${n}"/></svg></button>`).join("");
});
</script>
</body>
</html>
